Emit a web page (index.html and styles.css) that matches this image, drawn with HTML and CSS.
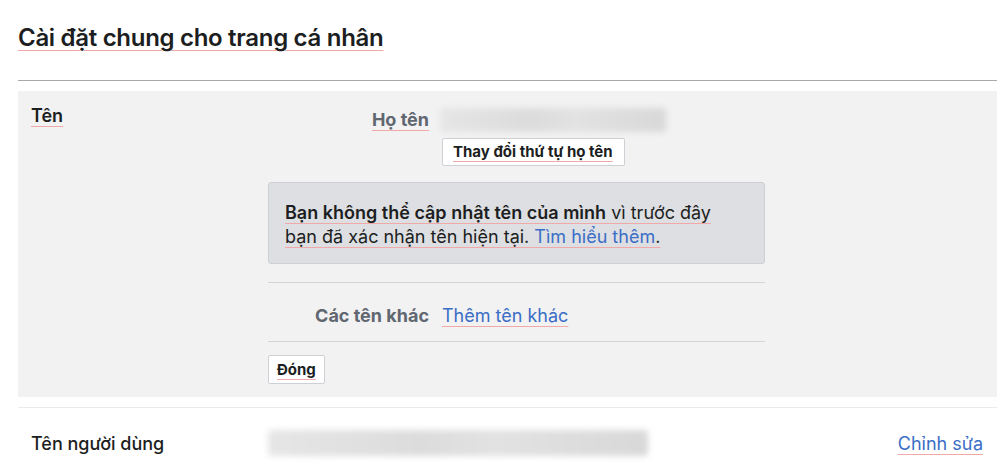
FILE: index.html
```html
<!DOCTYPE html>
<html lang="vi">
<head>
<meta charset="utf-8">
<title>Cài đặt chung</title>
<link rel="stylesheet" href="styles.css">
</head>
<body>
<div class="page">
  <h1 class="title"><span class="sp">Cài đặt chung cho trang cá nhân</span></h1>
  <div class="rule"></div>
  <section class="panel">
    <div class="panel-label"><span class="sp">Tên</span></div>
    <div class="panel-body">
      <div class="field">
        <div class="field-label"><span class="sp">Họ tên</span></div>
        <div class="field-value">
          <div class="blur name-blur"></div>
          <button class="btn"><span class="sp">Thay đổi thứ tự họ tên</span></button>
        </div>
      </div>
      <div class="notice"><span class="sp"><b>Bạn không thể cập nhật tên của mình</b> vì trước đây bạn đã xác nhận tên hiện tại. <a class="link" href="#">Tìm hiểu thêm</a>.</span></div>
      <div class="divider"></div>
      <div class="field other">
        <div class="field-label">Các tên khác</div>
        <div class="field-value"><a class="link sp" href="#">Thêm tên khác</a></div>
      </div>
      <div class="divider"></div>
      <button class="btn close"><span class="sp">Đóng</span></button>
    </div>
  </section>
  <div class="thin"></div>
  <section class="row">
    <div class="row-label">Tên người dùng</div>
    <div class="row-value"><div class="blur user-blur"></div></div>
    <a class="link sp edit" href="#">Chỉnh sửa</a>
  </section>
</div>
</body>
</html>
```
FILE: styles.css
```css
* { box-sizing: border-box; }
html, body { margin: 0; padding: 0; background: #fff; }
body {
  font-family: Inter, "Liberation Sans", Arial, sans-serif;
  color: #1c1e21;
  width: 1000px;
  height: 476px;
  overflow: hidden;
}
.page { padding: 24px 3px 0 18px; }
.sp {
  text-decoration: underline;
  text-decoration-color: #f0a8a8;
  text-decoration-thickness: 1px;
  text-underline-offset: 4px;
}
.title {
  margin: 0;
  font-size: 24px;
  font-weight: 600;
  line-height: 28px;
  letter-spacing: -0.3px;
  color: #1c1e21;
}
.rule { margin-top: 28px; height: 1px; background: #aaaaaa; }
.panel {
  margin-top: 10px;
  background: #f2f2f2;
  display: flex;
  padding: 14px 0 12px 0;
  height: 306px;
}
.panel-label {
  width: 250px;
  padding-left: 13px;
  font-size: 18px;
  font-weight: 600;
  line-height: 22px;
}
.panel-body { width: 497px; display: flex; flex-direction: column; }
.field { display: flex; align-items: flex-start; }
.field-label {
  width: 161px;
  text-align: right;
  font-size: 18px;
  font-weight: 700;
  color: #606770;
  line-height: 22px;
  padding-top: 4px;
}
.field-value { margin-left: 13px; display: flex; flex-direction: column; align-items: flex-start; }
.blur {
  background: linear-gradient(90deg, #e6e6e6 0%, #dcdcdc 40%, #e2e2e2 60%, #d8d8d8 100%);
  filter: blur(3px);
  border-radius: 4px;
}
.name-blur { width: 226px; height: 24px; margin-left: -2px; margin-top: 3px; }
.btn {
  font-family: Inter, "Liberation Sans", Arial, sans-serif;
  font-size: 15px;
  font-weight: 700;
  color: #1c1e21;
  background: #fff;
  border: 1px solid #cdd0d4;
  border-radius: 2px;
  padding: 0 11px 0 10px;
  height: 28px;
  line-height: 26px;
  margin-top: 6px;
}
.notice {
  margin-top: 16px;
  background: #dddfe2;
  border: 1px solid #ccd0d5;
  border-radius: 3px;
  padding: 18px 40px 16px 16px;
  font-size: 18px;
  line-height: 24px;
  height: 82px;
}
.notice b { font-weight: 600; }
.link { color: #3b6ec6; text-decoration: none; }
.link.sp { text-decoration: underline; text-decoration-color: #f0a8a8; text-decoration-thickness: 1px; text-underline-offset: 4px; }
.divider { height: 1px; background: #d4d4d4; margin-top: 18px; }
.other { padding: 18px 0 14px 0; }
.other .field-value { font-size: 18px; line-height: 22px; padding-top: 4px; }
.other + .divider { margin-top: 0; }
.btn.close { margin-top: 13px; align-self: flex-start; height: 29px; line-height: 27px; padding: 0 8px; }
.thin { margin-top: 10px; height: 1px; background: #ebebeb; }
.row { display: flex; align-items: center; height: 70px; padding-bottom: 0; }
.row-label { width: 250px; padding-left: 13px; font-size: 18px; font-weight: 500; }
.row-value { flex: 1; }
.user-blur { width: 380px; height: 26px; }
.edit { font-size: 18px; margin-right: 14px; }
```
